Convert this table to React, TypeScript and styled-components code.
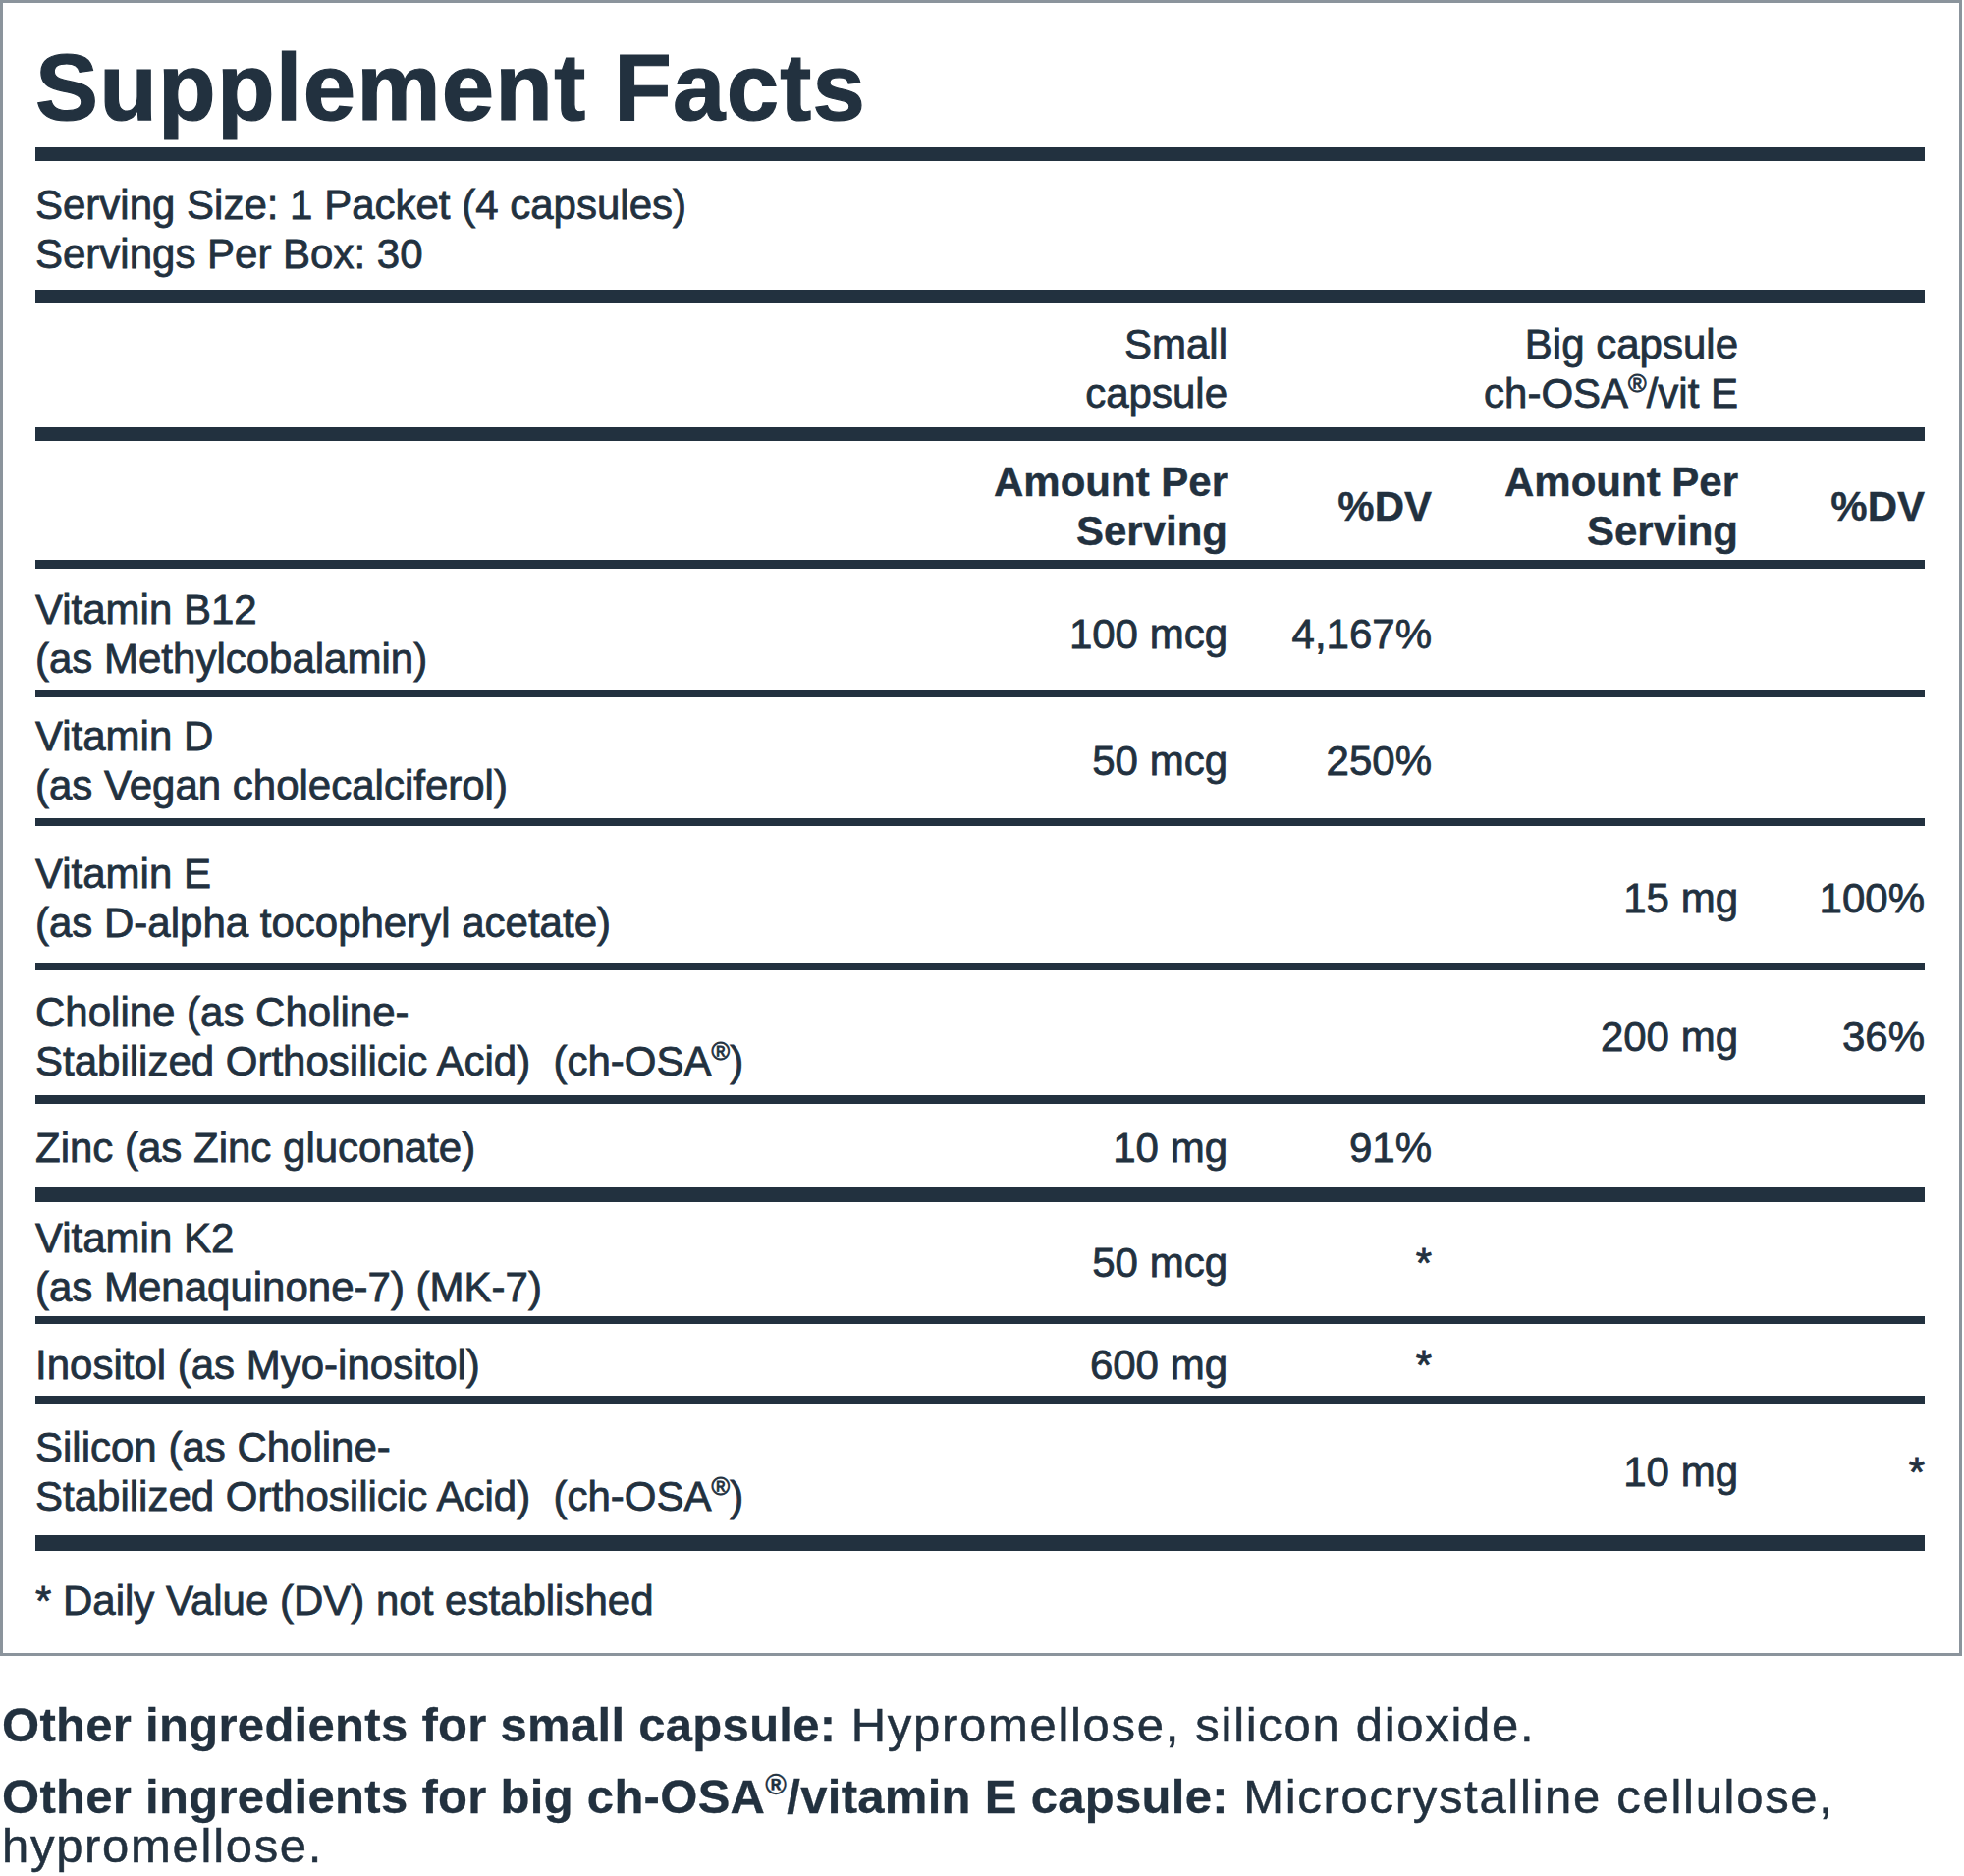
import React from "react";
import styled, { createGlobalStyle } from "styled-components";

const INK = "#22313f";

const GlobalStyle = createGlobalStyle`
  html, body {
    margin: 0;
    padding: 0;
    background: #ffffff;
  }
  body {
    font-family: "Liberation Sans", Arial, sans-serif;
    color: ${INK};
  }
`;

const Page = styled.div`
  width: 2000px;
  height: 1910px;
  overflow: hidden;
  background: #fff;
`;

const Panel = styled.section`
  box-sizing: border-box;
  width: 1998px;
  border: 3px solid #8b949c;
  padding: 38px 35px 28px 33px;
`;

const Title = styled.h1`
  margin: 0;
  font-size: 96px;
  line-height: 96px;
  font-weight: 700;
  letter-spacing: 1.2px;
  color: ${INK};
  -webkit-text-stroke: 1.2px ${INK};
`;

const Rule = styled.div<{ $h: number; $mt?: number }>`
  height: ${(p) => p.$h}px;
  margin-top: ${(p) => p.$mt ?? 0}px;
  background: ${INK};
`;

const Text = styled.div`
  font-size: 42px;
  line-height: 50px;
  -webkit-text-stroke: 0.8px ${INK};
`;

const ServingInfo = styled(Text)`
  padding: 20px 0 11px;
`;

const Grid = styled.div<{ $pt: number; $pb: number }>`
  display: grid;
  grid-template-columns: 914px 300px 208px 312px 190px;
  align-items: center;
  padding: ${(p) => p.$pt}px 0 ${(p) => p.$pb}px;
  font-size: 42px;
  line-height: 50px;
`;

const Cell = styled.div<{ $bold?: boolean; $right?: boolean }>`
  text-align: ${(p) => (p.$right ? "right" : "left")};
  font-weight: ${(p) => (p.$bold ? 700 : 400)};
  -webkit-text-stroke: ${(p) => (p.$bold ? `0.4px ${INK}` : `0.8px ${INK}`)};
  white-space: nowrap;
`;

const Reg = styled.span`
  font-size: 0.6em;
  vertical-align: 0.65em;
  line-height: 0;
`;

const Footnote = styled(Text)`
  margin-top: 26px;
`;

const Notes = styled.div`
  padding: 45px 0 0 2px;
  font-size: 49px;
  line-height: 50px;
`;

const Note = styled.p`
  margin: 0 0 23px;
  letter-spacing: 1.7px;
  -webkit-text-stroke: 0.5px ${INK};
`;

const Label = styled.strong`
  font-weight: 700;
  letter-spacing: 0.3px;
  -webkit-text-stroke: 0.3px ${INK};
`;

type Row = {
  name: React.ReactNode[];
  a1?: string;
  d1?: string;
  a2?: string;
  d2?: string;
  pt: number;
  pb: number;
  rule: number;
};

const osa = (
  <>
    Stabilized Orthosilicic Acid)&nbsp; (ch-OSA<Reg>®</Reg>)
  </>
);

const rows: Row[] = [
  { name: ["Vitamin B12", "(as Methylcobalamin)"], a1: "100 mcg", d1: "4,167%", pt: 17, pb: 6, rule: 8 },
  { name: ["Vitamin D", "(as Vegan cholecalciferol)"], a1: "50 mcg", d1: "250%", pt: 15, pb: 8, rule: 8 },
  { name: ["Vitamin E", "(as D-alpha tocopheryl acetate)"], a2: "15 mg", d2: "100%", pt: 24, pb: 15, rule: 8 },
  { name: ["Choline (as Choline-", osa], a2: "200 mg", d2: "36%", pt: 18, pb: 9, rule: 9 },
  { name: ["Zinc (as Zinc gluconate)"], a1: "10 mg", d1: "91%", pt: 20, pb: 15, rule: 15 },
  { name: ["Vitamin K2", "(as Menaquinone-7) (MK-7)"], a1: "50 mcg", d1: "*", pt: 12, pb: 4, rule: 8 },
  { name: ["Inositol (as Myo-inositol)"], a1: "600 mg", d1: "*", pt: 17, pb: 6, rule: 8 },
  { name: ["Silicon (as Choline-", osa], a2: "10 mg", d2: "*", pt: 20, pb: 14, rule: 16 },
];

export default function App() {
  return (
    <Page>
      <GlobalStyle />
      <Panel>
        <Title>Supplement Facts</Title>
        <Rule $h={14} $mt={13} />
        <ServingInfo>
          Serving Size: 1 Packet (4 capsules)
          <br />
          Servings Per Box: 30
        </ServingInfo>
        <Rule $h={14} />

        <Grid $pt={17} $pb={9}>
          <Cell />
          <Cell $right>
            Small
            <br />
            capsule
          </Cell>
          <Cell />
          <Cell $right>
            Big capsule
            <br />
            ch-OSA<Reg>®</Reg>/vit E
          </Cell>
          <Cell />
        </Grid>
        <Rule $h={14} />

        <Grid $pt={17} $pb={4}>
          <Cell />
          <Cell $right $bold>
            Amount Per
            <br />
            Serving
          </Cell>
          <Cell $right $bold>
            %DV
          </Cell>
          <Cell $right $bold>
            Amount Per
            <br />
            Serving
          </Cell>
          <Cell $right $bold>
            %DV
          </Cell>
        </Grid>
        <Rule $h={9} />

        {rows.map((r, i) => (
          <React.Fragment key={i}>
            <Grid $pt={r.pt} $pb={r.pb}>
              <Cell>
                {r.name.map((line, j) => (
                  <div key={j}>{line}</div>
                ))}
              </Cell>
              <Cell $right>{r.a1}</Cell>
              <Cell $right>{r.d1}</Cell>
              <Cell $right>{r.a2}</Cell>
              <Cell $right>{r.d2}</Cell>
            </Grid>
            <Rule $h={r.rule} />
          </React.Fragment>
        ))}

        <Footnote>* Daily Value (DV) not established</Footnote>
      </Panel>

      <Notes>
        <Note>
          <Label>Other ingredients for small capsule:</Label> Hypromellose, silicon dioxide.
        </Note>
        <Note>
          <Label>
            Other ingredients for big ch-OSA<Reg>®</Reg>/vitamin E capsule:
          </Label>{" "}
          Microcrystalline cellulose,
          <br />
          hypromellose.
        </Note>
      </Notes>
    </Page>
  );
}
